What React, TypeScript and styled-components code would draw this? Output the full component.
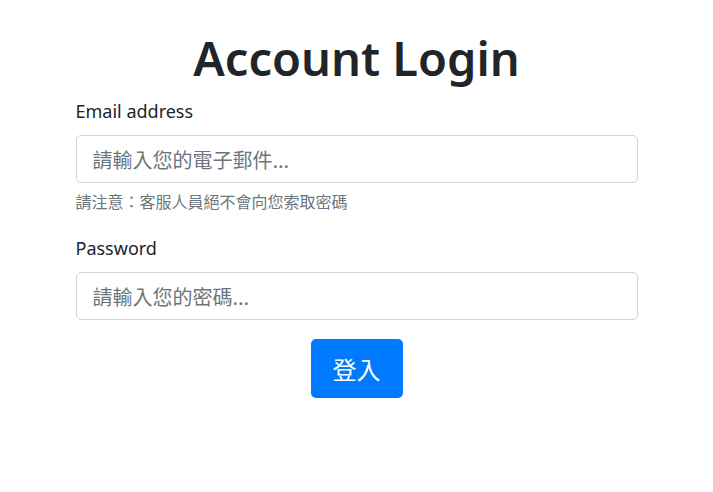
import React from "react";
import styled, { createGlobalStyle } from "styled-components";

const Global = createGlobalStyle`
  html, body { margin: 0; padding: 0; background: #fff; }
  body {
    font-family: "Noto Sans", "Noto Sans CJK TC", sans-serif;
    color: #212529;
  }
  * { box-sizing: border-box; }
`;

const Page = styled.div`
  width: 562px;
  margin: 0 auto;
  padding-top: 30px;
`;

const Title = styled.h1`
  margin: 0 0 12px;
  text-align: center;
  font-family: "Noto Sans", sans-serif;
  font-weight: 600;
  font-size: 47px;
  line-height: 1.2;
  color: #212529;
`;

const Form = styled.form`
  display: flex;
  flex-direction: column;
`;

const Group = styled.div<{ $gap?: number }>`
  display: flex;
  flex-direction: column;
  margin-bottom: ${(p) => p.$gap ?? 0}px;
`;

const Label = styled.label`
  font-size: 18px;
  line-height: 27px;
  margin-bottom: 10px;
  color: #212529;
`;

const Input = styled.input`
  height: 48px;
  width: 100%;
  padding: 0 16px;
  font-family: "Noto Sans CJK TC", sans-serif;
  font-size: 20px;
  color: #495057;
  border: 1px solid #ced4da;
  border-radius: 5px;
  background: #fff;
  outline: none;
  &::placeholder {
    color: #6c757d;
    opacity: 1;
  }
`;

const Help = styled.small`
  margin-top: 6px;
  font-family: "Noto Sans CJK TC", sans-serif;
  font-size: 16px;
  line-height: 24px;
  color: #6c757d;
`;

const Submit = styled.button`
  align-self: center;
  margin-top: 19px;
  width: 92px;
  height: 59px;
  border: none;
  border-radius: 5px;
  background: #007bff;
  color: #fff;
  font-family: "Noto Sans CJK TC", sans-serif;
  font-size: 24px;
  cursor: pointer;
`;

export default function App() {
  return (
    <>
      <Global />
      <Page>
        <Title>Account Login</Title>
        <Form onSubmit={(e) => e.preventDefault()}>
          <Group $gap={22}>
            <Label htmlFor="email">Email address</Label>
            <Input id="email" type="email" placeholder="請輸入您的電子郵件..." />
            <Help>請注意：客服人員絕不會向您索取密碼</Help>
          </Group>
          <Group>
            <Label htmlFor="password">Password</Label>
            <Input id="password" type="password" placeholder="請輸入您的密碼..." />
          </Group>
          <Submit type="submit">登入</Submit>
        </Form>
      </Page>
    </>
  );
}
